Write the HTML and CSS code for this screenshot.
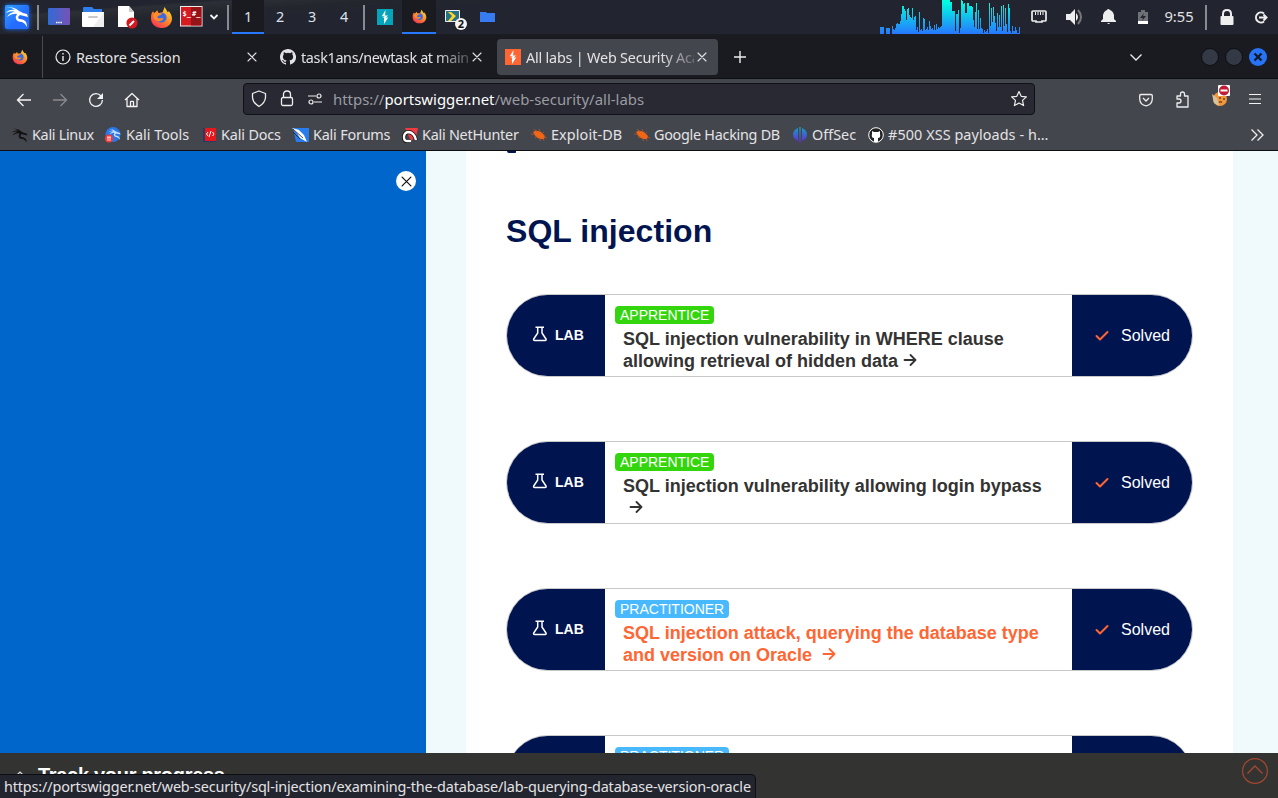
FILE: index.html
```html
<!DOCTYPE html>
<html lang="en">
<head>
<meta charset="utf-8">
<title>All labs | Web Security Academy</title>
<link rel="stylesheet" href="styles.css">
</head>
<body>
<svg class="defs" width="0" height="0">
<defs>
<linearGradient id="blue" x1="0" y1="0" x2="1" y2="1"><stop offset="0" stop-color="#30a0ff"/><stop offset=".6" stop-color="#246bff"/></linearGradient>
<linearGradient id="term" x1="0" x2="1"><stop offset="0" stop-color="#2f6bd8"/><stop offset="1" stop-color="#7852b5"/></linearGradient>
<linearGradient id="fox" x1=".9" y1="0" x2=".2" y2="1"><stop offset="0" stop-color="#ffe43c"/><stop offset=".5" stop-color="#ff8b25"/><stop offset="1" stop-color="#f52f5a"/></linearGradient>
<linearGradient id="spec" gradientUnits="userSpaceOnUse" x1="0" y1="2" x2="0" y2="34"><stop offset="0" stop-color="#00ffe0"/><stop offset="1" stop-color="#2777ff"/></linearGradient>
<linearGradient id="off" x1="0" y1="0" x2="0" y2="1"><stop offset="0" stop-color="#16a0c8"/><stop offset="1" stop-color="#6528cf"/></linearGradient>
<symbol id="firefox" viewBox="0 0 22 22"><path d="M3 5l1 2 3-3 1 3 4-1 2-5 3 5 1-1c3 3 4 8 2 11-2 4-6 5-9 5C5 21 1 17 1 12c0-3 0-5 2-7z" fill="url(#fox)"/><circle cx="11" cy="11" r="4.9" fill="#3f69df"/><path d="M4 7c3-2 5 0 8 0-1 2-5 2-5 4 2 2 4 0 6 1-2 4-9 3-10-2z" fill="#ff8c2c"/></symbol>
<symbol id="dragon" viewBox="0 0 24 24"><path d="M2 2q8 0 12 4l4 2 4 1 1 3-4-1-4-1q-3 2-1 4 5 0 7 3 1 2 1 5-2-4-5-5-5 0-6-3-1-2 1-5-4-1-10 3 3-5 8-5Q6 5 1 8q3-4 9-3Q6 2 2 2z" fill="currentColor"/></symbol>
<symbol id="github" viewBox="0 0 16 16"><path fill="currentColor" d="M8 0C3.58 0 0 3.58 0 8c0 3.54 2.29 6.53 5.47 7.59.4.07.55-.17.55-.38v-1.49c-2.01.37-2.53-.49-2.69-.94-.09-.23-.48-.94-.82-1.13-.28-.15-.68-.52-.01-.53.63-.01 1.08.58 1.23.82.72 1.21 1.87.87 2.33.66.07-.52.28-.87.51-1.07-1.78-.2-3.64-.89-3.64-3.95 0-.87.31-1.59.82-2.15-.08-.2-.36-1.02.08-2.12 0 0 .67-.21 2.2.82a7.6 7.6 0 014 0c1.53-1.04 2.2-.82 2.2-.82.44 1.1.16 1.92.08 2.12.51.56.82 1.27.82 2.15 0 3.07-1.87 3.75-3.65 3.95.29.25.54.73.54 1.48v2.2c0 .21.15.46.55.38A8 8 0 008 0z"/></symbol>
<symbol id="x" viewBox="0 0 10 10"><path d="M1 1l8 8M9 1L1 9" stroke="currentColor" stroke-width="1.1" stroke-linecap="round"/></symbol>
<symbol id="bolt" viewBox="0 0 16 16"><path d="M8.500 1L4.800 7.300H8zM8 6.500h3L8.500 9H6zM11.300 8.200L7 15V9.300z" fill="#fff"/></symbol>
<symbol id="bug" viewBox="0 0 16 16"><path d="M2 5l3-1.500 5 1.500 4 4-1 3H9L5 10z" fill="#f06516"/><path d="M0 7l4 .5M3 2l3 3M8 2l1 3M13 5l-2 2M16 11l-3-1M4 11l2-2M9 14l.5-3M13 14l-1-3" stroke="#c05a25" stroke-width=".7"/></symbol>
<symbol id="flask" viewBox="0 0 16 18"><path d="M3.500 2.200h8.500M5.700 2.500V8L1.700 14q-.6 1.500 1 1.500h10.300q1.600 0 1-1.500L10 8V2.500M4 11.500" fill="none" stroke="#fff" stroke-width="1.500" stroke-linejoin="round"/></symbol>
<symbol id="check" viewBox="0 0 14 12"><path d="M1.500 6l3.500 3.500L12.500 2" fill="none" stroke="#ff6633" stroke-width="2" stroke-linecap="round" stroke-linejoin="round"/></symbol>
<symbol id="arrow" viewBox="0 0 14 14"><path d="M1.500 7h11M7.500 2l5 5-5 5" fill="none" stroke="currentColor" stroke-width="1.800" stroke-linecap="round" stroke-linejoin="round"/></symbol>
</defs>
</svg>

<div class="panel">
  <span class="slot w34"><svg class="glow" width="26" height="26" viewBox="0 0 26 26"><rect x="1" y="1" width="24" height="24" rx="2" fill="url(#blue)"/><svg x="1" y="1" width="24" height="24" color="#fff"><use href="#dragon"/></svg></svg></span>
  <span class="slot w8"><i class="sep"></i></span>
  <span class="slot w34"><svg width="22" height="18"><rect width="22" height="17" rx="1" fill="url(#term)"/><path d="M8 14.500h6" stroke="#fff" stroke-width="1.500" stroke-dasharray="1.500 .7"/></svg></span>
  <span class="slot w34"><svg width="22" height="20"><path d="M1 1q0-1 1-1h8l2 2h8v6H1z" fill="#2f7de8"/><path d="M0 5h22v14q0 1-1 1H1q-1 0-1-1z" fill="#fff"/><path d="M22 5v15H11z" fill="#eee"/><path d="M7 10h8" stroke="#c9c9c9" stroke-width="2" stroke-linecap="round"/></svg></span>
  <span class="slot w34"><svg width="22" height="24"><path d="M2 1h11l5 6v15H2z" fill="#fff"/><path d="M13 1v6h5z" fill="#ccc"/><circle cx="16" cy="18" r="5.600" fill="#d21920"/><path d="M13.500 20.500l4.500-4.500" stroke="#fff" stroke-width="2"/></svg></span>
  <span class="slot w34"><svg width="23" height="23"><use href="#firefox"/></svg></span>
  <span class="slot w26"><svg width="23" height="22"><rect x=".5" y=".5" width="21.500" height="19.500" fill="#d71920" stroke="#eee"/><path d="M11 1h10.500v18.500H11z" fill="#961317"/><text class="root" x="2.500" y="10">$_</text><text class="root" x="12" y="10">#_</text></svg></span>
  <span class="slot w20"><svg width="10" height="8"><path d="M1.500 2L5 5.500 8.500 2" fill="none" stroke="#f3f3f3" stroke-width="1.800"/></svg></span>
  <span class="slot w8"><i class="sep"></i></span>
  <span class="ws on">1</span><span class="ws">2</span><span class="ws">3</span><span class="ws">4</span>
  <span class="slot w8"><i class="sep"></i></span>
  <span class="slot w34"><svg width="16" height="16"><path d="M0 0h16v16H0z" fill="#05a4bd"/><use href="#bolt" width="16" height="16"/></svg></span>
  <span class="slot w34 task"><svg width="15" height="15"><use href="#firefox"/></svg></span>
  <span class="slot w34"><svg class="viewer" width="24" height="22"><path d="M1.500 1.500h14v11h-14z" fill="#267184" stroke="#eee"/><path d="M4 3h3l5 4-5 5H4l4-5z" fill="#ffd52b"/><circle cx="17" cy="15" r="6" fill="#f4f4f4"/><text class="count" x="13.800" y="19">2</text></svg></span>
  <span class="slot w34"><svg width="15" height="12"><path d="M0 1h6l1 1h8v9H0z" fill="#367bf0"/></svg></span>
  <span class="grow"></span>
  <svg width="140" height="34"><path fill="url(#spec)" d="M0 27h4v7H0zM6 28h4v6H6z"/><path id="bars" fill="url(#spec)"/></svg>
  <span class="slot w37"><svg width="16" height="16"><path d="M2 2h12q1 0 1 1v8q0 1-1 1h-3v1H5v-1H2q-1 0-1-1V3q0-1 1-1z" fill="none" stroke="#eee" stroke-width="1.700"/><path d="M4.500 3v3M7 3v3M9.500 3v3M12 3v3" stroke="#eee" stroke-width="1"/></svg></span>
  <span class="slot w34"><svg width="18" height="16"><path d="M1 5h4l5-5v16l-5-5H1z" fill="#eee"/><path d="M11 4q4 4 0 8" fill="#eee"/><path d="M13 1q6 7 0 14" fill="none" stroke="#777" stroke-width="2"/></svg></span>
  <span class="slot w35"><svg width="15" height="16"><path d="M0 13h15v-1l-2-2V6q-1-4-4-5-2-2-3 0-3 1-4 5v4l-2 2zm6 1h3q-1 2-3 0z" fill="#eee"/></svg></span>
  <span class="slot w34"><svg width="10" height="15"><path d="M0 2h3V0h4v2h3v9H0z" fill="#707178"/><path d="M0 11h10v3H0z" fill="#fff"/><path d="M6 3L2 8h3l-1 3 4-5H5z" fill="#22242f"/></svg></span>
  <span class="clock">9:55</span>
  <span class="slot w16"><i class="sep"></i></span>
  <span class="slot w26"><svg width="14" height="17"><path d="M3 8V5q0-4 4-4t4 4v3" fill="none" stroke="#eee" stroke-width="2"/><rect x=".5" y="7" width="13" height="9" rx="1" fill="#eee"/></svg></span>
  <span class="slot w38"><svg width="16" height="15"><path d="M11 3.500a5 5 0 100 8M6 7.500h8M10.500 4.500l3 3-3 3" fill="none" stroke="#eee" stroke-width="2"/></svg></span>
</div>

<div class="tabs">
  <span class="pinned"><svg width="16" height="16"><use href="#firefox"/></svg></span>
  <div class="tab first"><svg width="16" height="16"><circle cx="8" cy="8" r="7" fill="none" stroke="#eee" stroke-width="1.200"/><path d="M8 7v5M8 4v1.500" stroke="#eee" stroke-width="1.400"/></svg><span class="label restore">Restore Session</span><svg width="10" height="10"><use href="#x"/></svg></div>
  <div class="tab second"><svg width="16" height="16"><use href="#github"/></svg><span class="label fade">task1ans/newtask at main</span><svg width="10" height="10"><use href="#x"/></svg></div>
  <div class="tab active"><svg width="16" height="16"><path d="M0 0h16v16H0z" fill="#ff6633"/><use href="#bolt"/></svg><span class="label fade labs">All labs | Web Security Aca</span><svg width="10" height="10"><use href="#x"/></svg></div>
  <svg class="plus" width="14" height="14"><path d="M7 1v12M1 7h12" stroke="#eee" stroke-width="1.400"/></svg>
  <span class="grow"></span>
  <svg class="down" width="14" height="9"><path d="M1.500 1.500L7 7l5.500-5.500" fill="none" stroke="#eee" stroke-width="1.300"/></svg>
  <i class="dot"></i><i class="dot"></i><i class="dot close"><svg width="10" height="10"><path d="M1.500 1.500l7 7M8.500 1.500l-7 7" stroke="#111827" stroke-width="2.200"/></svg></i>
</div>

<div class="toolbar">
  <div class="nav">
    <svg width="16" height="16"><path d="M15 8H1.500M7.500 2l-6 6 6 6" fill="none" stroke="#f3f3f3" stroke-width="1.300"/></svg>
    <svg width="16" height="16"><path d="M1 8h13.500M8.500 2l6 6-6 6" fill="none" stroke="#8a8b8f" stroke-width="1.300"/></svg>
    <svg width="16" height="16"><path d="M13 4A6.400 6.400 0 1014.400 8" fill="none" stroke="#f3f3f3" stroke-width="1.300"/><path d="M15 1v6H9z" fill="#f3f3f3"/></svg>
    <svg width="16" height="16"><path d="M1 8l7-6.500L15 8M3 6.500v8h10v-8M6.500 14.500V10q0-.7.700-.7h1.600q.7 0 .7.700v4.500" fill="none" stroke="#f3f3f3" stroke-width="1.300" stroke-linejoin="round"/></svg>
    <div class="url">
      <svg width="16" height="18"><path d="M8 1l6.500 2.500v4Q14 13 8 16.500 2 13 1.500 7.500v-4z" fill="none" stroke="#eee" stroke-width="1.300" stroke-linejoin="round"/></svg>
      <svg width="14" height="18"><path d="M3.500 7V4.500q0-3.500 3.500-3.500t3.500 3.500V7" fill="none" stroke="#eee" stroke-width="1.300"/><rect x="1.500" y="7.500" width="11" height="8" rx="1.500" fill="none" stroke="#eee" stroke-width="1.300"/></svg>
      <svg width="16" height="12"><g fill="none" stroke="#eee" stroke-width="1.200"><path d="M1 3h8M7 9h8"/><circle cx="12" cy="3" r="2"/><circle cx="4" cy="9" r="2"/></g></svg>
      <span class="address">https://<b>portswigger.net</b>/web-security/all-labs</span>
      <span class="grow"></span>
      <svg width="18" height="18"><path d="M9 1.500l2.200 4.800 5.200.6-3.900 3.500 1.100 5.200L9 13l-4.600 2.600 1.100-5.200L1.600 6.900l5.200-.6z" fill="none" stroke="#eee" stroke-width="1.200" stroke-linejoin="round"/></svg>
    </div>
    <span class="grow"></span>
    <svg class="pocket" width="14" height="14"><path d="M2 1.500h10q1.300 0 1.300 1.300V6Q13 12 7 12.800 1 12 .7 6V2.800Q.7 1.500 2 1.500zM4 5l3 3 3-3" fill="none" stroke="#eee" stroke-width="1.300"/></svg>
    <svg class="ext" width="15" height="17"><path d="M2 5h3.500V3q0-2 2-2t2 2v2H13v11H2v-4h2q2 0 2-2T4 8H2z" fill="none" stroke="#eee" stroke-width="1.300" stroke-linejoin="round"/></svg>
    <svg class="cookie" width="20" height="24"><circle cx="9" cy="15" r="7" fill="#f4973b"/><path d="M1 10l5 4 2 8-5-3z" fill="#d7c3a0"/><path d="M8 14h2M12 15h2M8 18h3" stroke="#6c4321" stroke-width="1.300"/><rect x="7" y="1" width="12" height="11" rx="1" fill="#fff"/><circle cx="13" cy="6.500" r="5" fill="#c31b35"/><path d="M9.500 6.500h7" stroke="#fff" stroke-width="2"/></svg>
    <svg class="menu" width="12" height="12"><path d="M0 1.500h12M0 6h12M0 10.500h12" stroke="#f3f3f3" stroke-width="1.200"/></svg>
  </div>
  <div class="bookmarks">
    <span class="bm b1"><svg width="17" height="17" color="#111"><use href="#dragon"/></svg><span>Kali Linux</span></span>
    <span class="bm b2"><svg width="16" height="16"><circle cx="8" cy="7.500" r="7.500" fill="#2977e8"/><svg x="3" y="1" width="13" height="13" color="#c8e0ff"><use href="#dragon"/></svg><circle cx="4" cy="11.500" r="4" fill="#ef3b3e"/><path d="M2 10h4M3 10v4M5 10v4" stroke="#fff" stroke-width=".8"/></svg><span>Kali Tools</span></span>
    <span class="bm b3"><svg width="13" height="16"><path d="M0 1h13v13H0z" fill="#e3171c"/><path d="M0 1h2v13H0M0 14h13v1H0" fill="#263b68"/><path d="M5 5L3.500 7 5 9M8 4L6 10M9.500 5L11 7 9.500 9" fill="none" stroke="#fff" stroke-width="1"/></svg><span>Kali Docs</span></span>
    <span class="bm b4"><svg width="17" height="16"><path d="M1 1h16v14H4z" fill="#287ced"/><path d="M0 1l7 2 5 5 3 7-7-4-3-5z" fill="#fff"/><path d="M1 2l10 9M1 5l7 7" stroke="#222" stroke-width=".8"/></svg><span>Kali Forums</span></span>
    <span class="bm b5"><svg width="16" height="16"><path d="M3 1h13l-2 9-5 4z" fill="#f13a42"/><path d="M9 14H5q-3 0-3-4t4-5q6 0 8 8" fill="none" stroke="#111" stroke-width="4"/><path d="M9 14H5q-3 0-3-4t4-5q6 0 8 8" fill="none" stroke="#fff" stroke-width="2.400"/></svg><span>Kali NetHunter</span></span>
    <span class="bm b6"><svg width="16" height="16"><use href="#bug"/></svg><span>Exploit-DB</span></span>
    <span class="bm b7"><svg width="16" height="16"><use href="#bug"/></svg><span>Google Hacking DB</span></span>
    <span class="bm b8"><svg width="14" height="16"><path d="M5 1v13Q0 12 0 7.500T5 1zM9 1v13q5-2 5-6.500T9 1zM6.300 0h1.400v16H6.300z" fill="url(#off)"/></svg><span>OffSec</span></span>
    <span class="bm b9"><svg width="16" height="16"><circle cx="8" cy="8" r="7.300" fill="#222" stroke="#fff" stroke-width="1"/><path d="M4 4l2 1h4l2-1v3q1 4-2 4v4H6v-4q-3 0-2-4z" fill="#fff"/></svg><span>#500 XSS payloads - h…</span></span>
    <span class="grow"></span>
    <svg class="more" width="14" height="14"><path d="M1.500 1.500L7 7l-5.500 5.500M7.500 1.500L13 7l-5.500 5.500" fill="none" stroke="#eee" stroke-width="1.300"/></svg>
  </div>
</div>

<div class="page">
  <aside><span class="dismiss"><svg width="11" height="11" viewBox="0 0 10 10"><use href="#x"/></svg></span></aside>
  <main>
    <i class="tail"></i>
    <h1>SQL injection</h1>
    <div class="lab"><div class="left"><svg width="16" height="18"><use href="#flask"/></svg><span>LAB</span></div><div class="body"><span class="level">APPRENTICE</span><a>SQL injection vulnerability in WHERE clause<br>allowing retrieval of hidden data <svg width="14" height="14"><use href="#arrow"/></svg></a></div><div class="right"><svg width="14" height="12"><use href="#check"/></svg>Solved</div></div>
    <div class="lab"><div class="left"><svg width="16" height="18"><use href="#flask"/></svg><span>LAB</span></div><div class="body"><span class="level">APPRENTICE</span><a>SQL injection vulnerability allowing login bypass<br><svg class="solo" width="14" height="14"><use href="#arrow"/></svg></a></div><div class="right"><svg width="14" height="12"><use href="#check"/></svg>Solved</div></div>
    <div class="lab hover"><div class="left"><svg width="16" height="18"><use href="#flask"/></svg><span>LAB</span></div><div class="body"><span class="level prac">PRACTITIONER</span><a>SQL injection attack, querying the database type<br>and version on Oracle <svg class="wide" width="14" height="14"><use href="#arrow"/></svg></a></div><div class="right"><svg width="14" height="12"><use href="#check"/></svg>Solved</div></div>
    <div class="lab"><div class="left"></div><div class="body"><span class="level prac">PRACTITIONER</span></div><div class="right"></div></div>
  </main>
</div>

<footer>
  <svg class="caret" width="8" height="8"><path d="M1 4l3-3 3 3" fill="none" stroke="#ddd" stroke-width="1.200"/></svg>
  <span class="track">Track your progress</span>
  <span class="grow"></span>
  <svg class="top" width="28" height="28"><circle cx="14" cy="14" r="12.400" fill="none" stroke="#a5482e" stroke-width="1.200"/><path d="M6.500 16.500L14 9l7.500 7.500" fill="none" stroke="#a5482e" stroke-width="1.400"/></svg>
  <div class="status"><span>https://portswigger.net/web-security/sql-injection/examining-the-database/lab-querying-database-version-oracle</span></div>
</footer>
<script src="spectrum.js"></script>
</body>
</html>
```
FILE: spectrum.js
```javascript
// Top edge of each one-pixel audio bar in the panel; 34 is the baseline.
const tops = [
  26,29,30,28,24,23,24,24,21,14, 6,6,9,11,20,9,8,15,17,18, 8,20,17,16,30,27,32,12,30,29, 31,18,19,30,29,27,30,21,26,29,
  28,30,25,30,24,29,27,28,27,26, 0,0,0,0,0,0,0,0,2,2, 11,11,11,31,14,14,10,33,28,0, 1,4,3,13,13,3,3,6,6,6,
  7,20,27,12,3,29,10,29,18,28, 29,33,30,32,31,29,33,3,26,8, 22,7,16,23,31,13,27,15,27,6, 31,5,26,8,24,32,4,8,31,33,
  26,31,31,27,30,33,33,27
];
document.getElementById("bars").setAttribute(
  "d", tops.map((t, i) => `M${12 + i} ${t}h1V34h-1z`).join("")
);
```
FILE: styles.css
```css
* { box-sizing: border-box; }
body { margin: 0; width: 1278px; height: 798px; overflow: hidden; display: flex; flex-direction: column; font-family: "Noto Sans", sans-serif; font-size: 14.4px; color: #e3e3e5; background: #1a1b20; }
svg { flex: none; display: block; }
.defs { position: absolute; }
.grow { flex: 1; }
.panel { height: 36px; flex: none; display: flex; align-items: flex-start; background: linear-gradient(176deg, #22242f 0 12%, #2d2f37 14%, #24262e 22%, #22242f 30%); border-bottom: 2px solid #1b1c22; }
.slot { height: 34px; flex: none; display: flex; align-items: center; justify-content: center; }
.w8 { width: 8px; } .w16 { width: 16px; } .w20 { width: 20px; } .w26 { width: 26px; } .w34 { width: 34px; } .w35 { width: 35px; } .w37 { width: 37px; }
.w38 { width: 38px; padding-left: 4px; }
.glow { filter: drop-shadow(0 0 2px #1675ff); }
.sep { width: 2px; height: 25px; background: #8a8b90; }
.ws { width: 32px; height: 34px; line-height: 33px; text-align: center; flex: none; color: #dce3ed; }
.on, .task { background: #1a1b21; border-bottom: 2px solid #2878ff; }
.root { font: bold 7px "DejaVu Sans Mono", monospace; fill: #fff; }
.count { font: bold 11px "Noto Sans", sans-serif; fill: #111; }
.viewer { margin: 6px 0 0 6px; }
.clock { width: 38px; line-height: 33px; text-align: center; font-size: 14.7px; }
.tabs { height: 43px; flex: none; display: flex; align-items: center; background: #1a1b20; border-bottom: 1px solid #0e0f12; }
.pinned { width: 43px; height: 42px; padding-left: 12px; display: flex; align-items: center; border-right: 1px solid #4a4b51; }
.tab { height: 36px; display: flex; align-items: center; flex: none; }
.label { white-space: nowrap; overflow: hidden; flex: none; line-height: 24px; padding-top: 1px; }
.first { width: 229px; padding-left: 12px; }
.restore { width: 171px; margin-left: 5px; letter-spacing: -.14px; }
.second { width: 225px; padding-left: 8px; }
.fade { width: 167px; margin: 0 4px 0 5px; letter-spacing: -.34px; -webkit-mask-image: linear-gradient(90deg, #000 80%, #0004); mask-image: linear-gradient(90deg, #000 80%, #0004); }
.labs { width: 168px; margin-right: 3px; letter-spacing: -.2px; }
.active { width: 221px; padding-left: 8px; background: #44464d; border-radius: 4px; }
.plus { margin-left: 15px; }
.down { margin-right: 58px; }
.dot { width: 18px; height: 18px; margin-right: 6px; border-radius: 50%; background: #343946; border: 1px solid #0d0e12; }
.close { background: #2673f5; border: 0; margin-right: 11px; display: flex; align-items: center; justify-content: center; }
.toolbar { height: 72px; flex: none; background: #44464d; border-bottom: 1px solid #0d0e12; }
.nav { height: 41px; padding-left: 16px; display: flex; align-items: center; }
.nav > svg { margin-right: 20px; }
.nav > .url { width: 792px; height: 32px; margin: -1px 0 0 83px; padding: 0 6px 0 7px; border: 1px solid #101116; border-radius: 4px; background: #282933; display: flex; align-items: center; }
.url svg + svg { margin-left: 13px; }
.address { margin-left: 10px; color: #9b9ca2; white-space: nowrap; font-size: 14.93px; line-height: 20px; }
.address b { color: #fff; font-weight: 400; }
.nav .pocket { margin-right: 22px; }
.nav .ext { margin-right: 21px; }
.nav .cookie { margin: -7px 18px 0 0; }
.nav .menu { margin: -1px 17px 0 0; }
.bookmarks { height: 30px; display: flex; align-items: center; padding-left: 11px; }
.bm { flex: none; display: flex; align-items: center; gap: 4px; white-space: nowrap; line-height: 24px; }
.b1 { width: 94px; letter-spacing: -.3px; } .b2 { width: 98px; gap: 5px; } .b3 { width: 89px; gap: 5px; letter-spacing: -.15px; } .b4 { width: 110px; letter-spacing: -.2px; } .b5 { width: 129px; letter-spacing: -.25px; } .b6 { width: 103px; letter-spacing: .1px; } .b7 { width: 159px; letter-spacing: -.28px; } .b8 { width: 75px; gap: 5px; } .b9 { letter-spacing: .08px; }
.more { margin-right: 14px; }
.page { height: 602px; flex: none; display: flex; overflow: hidden; background: #f0f9fb; font-family: "Liberation Sans", Arial, sans-serif; }
aside { width: 426px; background: #0066cc; display: flex; justify-content: flex-end; align-items: flex-start; padding: 20px 10px 0; }
.dismiss { width: 20px; height: 20px; border-radius: 50%; background: #fff; color: #111; display: flex; align-items: center; justify-content: center; }
main { width: 767px; height: 800px; flex: none; margin-left: 40px; padding: 0 40px; background: #fff; }
.tail { display: block; width: 9px; height: 2px; margin-left: 1px; background: #00144f; border-radius: 0 0 2px 5px; }
h1 { height: 37px; margin: 60px 0 44px; line-height: 37px; font-size: 32px; letter-spacing: .05px; color: #00144f; }
.lab { width: 687px; height: 83px; margin-bottom: 64px; display: flex; overflow: hidden; border: 1px solid #c8c8c8; border-radius: 42px; }
.left { width: 98px; background: #00144f; display: flex; align-items: center; gap: 7px; padding-left: 25px; font-size: 14px; font-weight: 700; color: #fff; }
.left svg { margin-top: -3px; }
.left span { margin-top: -2px; }
.body { width: 467px; padding: 11px 0 0 10px; color: #333332; display: flex; flex-direction: column; align-items: flex-start; }
.level { height: 18px; line-height: 19px; padding: 0 5px; border-radius: 4px; font-size: 14px; color: #fff; background: #33d60c; flex: none; }
.prac { background: #48b9ff; }
.body a { margin: 4px 0 0 8px; font-size: 18px; font-weight: 700; line-height: 22px; white-space: nowrap; }
.body a svg { display: inline-block; vertical-align: 0; }
.body a .solo { margin-left: 6px; }
.body a .wide { margin-left: 5px; }
.hover a { color: #ff6633; }
.right { width: 120px; background: #00144f; display: flex; align-items: center; gap: 12px; padding-left: 23px; font-size: 16px; color: #fff; }
footer { height: 45px; flex: none; position: relative; display: flex; align-items: flex-start; background: #333332; }
.caret { margin: 18px 14px 0 16px; }
.track { margin-top: 10px; font: bold 20px/24px "Liberation Sans", Arial, sans-serif; letter-spacing: -.3px; color: #fff; }
.top { margin: 4px 9px 0 0; }
.status { position: absolute; left: 0; bottom: 0; width: 756px; height: 24px; padding-left: 4px; line-height: 23px; letter-spacing: -.14px; background: #23252e; border: 1px solid #0c0d11; border-width: 1px 1px 0 0; border-radius: 0 5px 0 0; white-space: nowrap; }
```
